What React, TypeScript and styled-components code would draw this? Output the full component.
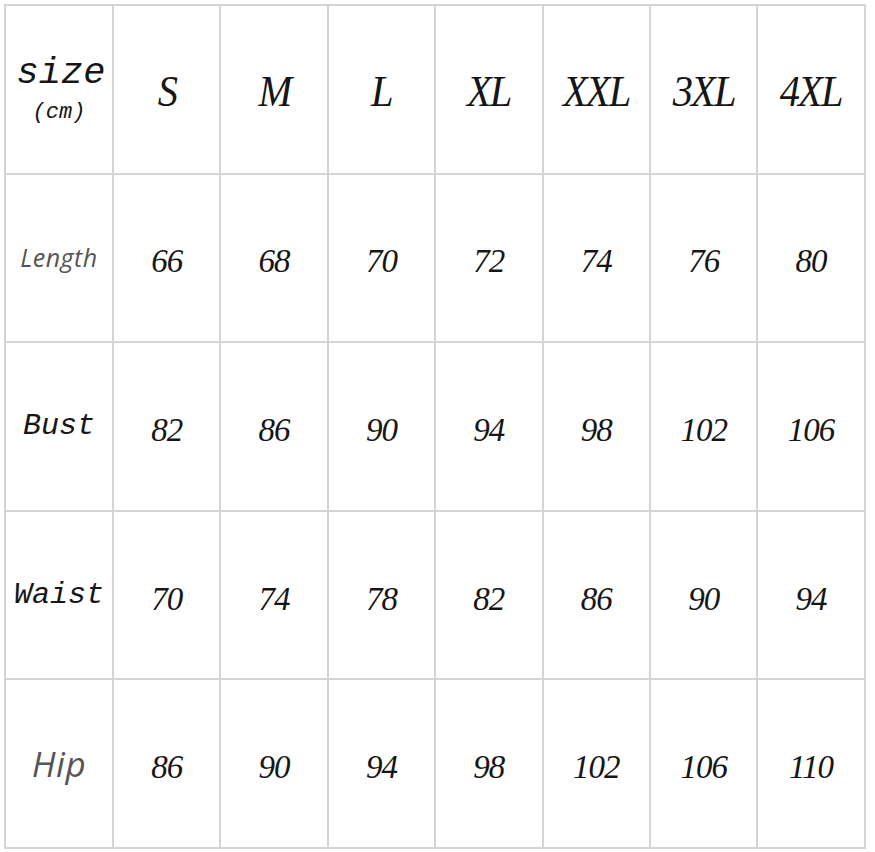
import styled, { createGlobalStyle } from 'styled-components';

const GlobalStyle = createGlobalStyle`
  html, body {
    margin: 0;
    padding: 0;
    background: #ffffff;
  }
`;

const sizes = ['S', 'M', 'L', 'XL', 'XXL', '3XL', '4XL'];

type LabelKind = 'sans' | 'mono';

const rows: { label: string; kind: LabelKind; size: number; values: number[] }[] = [
  { label: 'Length', kind: 'sans', size: 25, values: [66, 68, 70, 72, 74, 76, 80] },
  { label: 'Bust', kind: 'mono', size: 30, values: [82, 86, 90, 94, 98, 102, 106] },
  { label: 'Waist', kind: 'mono', size: 30, values: [70, 74, 78, 82, 86, 90, 94] },
  { label: 'Hip', kind: 'sans', size: 35, values: [86, 90, 94, 98, 102, 106, 110] },
];

const Page = styled.div`
  padding: 4px 0 0 4px;
`;

const Table = styled.div`
  display: grid;
  grid-template-columns: 108px repeat(7, 107.4px);
  grid-auto-rows: 168.6px;
  border-top: 2px solid #d4d4d4;
  border-left: 2px solid #d4d4d4;
  width: max-content;
`;

const Cell = styled.div`
  display: flex;
  flex-direction: column;
  align-items: center;
  justify-content: center;
  border-right: 2px solid #d4d4d4;
  border-bottom: 2px solid #d4d4d4;
  box-sizing: border-box;
  color: #161616;
`;

const SizeHead = styled.span`
  font-family: 'Liberation Serif', 'Times New Roman', serif;
  font-style: italic;
  font-size: 44px;
  letter-spacing: -2px;
  transform: scaleX(0.92);
  line-height: 1;
  margin-top: 6px;
`;

const Value = styled.span`
  font-family: 'Liberation Serif', 'Times New Roman', serif;
  font-style: italic;
  font-size: 33px;
  letter-spacing: -1px;
  line-height: 1;
  margin-top: 8px;
`;

const CornerTitle = styled.span`
  font-family: 'Liberation Mono', 'Courier New', monospace;
  font-style: italic;
  font-size: 37px;
  line-height: 1;
  margin-top: 0;
  margin-left: 4px;
`;

const CornerUnit = styled.span`
  font-family: 'Liberation Mono', 'Courier New', monospace;
  font-style: italic;
  font-size: 22px;
  line-height: 1;
  margin-top: 10px;
  margin-left: 0;
`;

const RowLabel = styled.span<{ $kind: LabelKind; $size: number }>`
  font-family: ${p =>
    p.$kind === 'sans'
      ? "'Open Sans', 'Noto Sans', sans-serif"
      : "'Liberation Mono', 'Courier New', monospace"};
  font-style: italic;
  font-size: ${p => p.$size}px;
  letter-spacing: ${p => (p.$kind === 'sans' ? '0.5px' : '0')};
  color: ${p => (p.$kind === 'sans' ? '#555' : '#161616')};
  line-height: 1;
`;

export default function App() {
  return (
    <Page>
      <GlobalStyle />
      <Table>
        <Cell>
          <CornerTitle>size</CornerTitle>
          <CornerUnit>(cm)</CornerUnit>
        </Cell>
        {sizes.map(s => (
          <Cell key={s}>
            <SizeHead>{s}</SizeHead>
          </Cell>
        ))}
        {rows.map(row => (
          <>
            <Cell key={row.label}>
              <RowLabel $kind={row.kind} $size={row.size}>{row.label}</RowLabel>
            </Cell>
            {row.values.map((v, i) => (
              <Cell key={`${row.label}-${i}`}>
                <Value>{v}</Value>
              </Cell>
            ))}
          </>
        ))}
      </Table>
    </Page>
  );
}
